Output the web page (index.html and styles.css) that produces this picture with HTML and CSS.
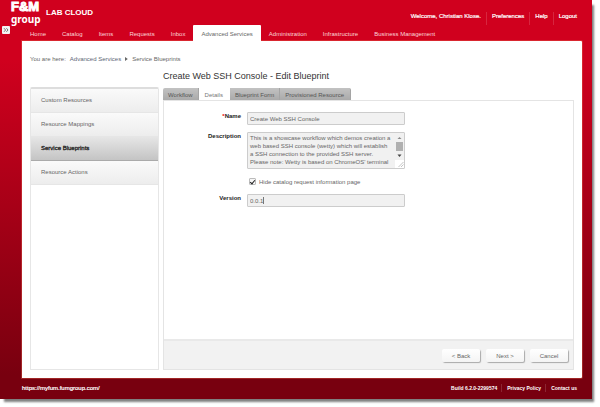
FILE: index.html
```html
<!DOCTYPE html>
<html lang="en">
<head>
<meta charset="utf-8">
<title>Lab Cloud - Edit Blueprint</title>
<link rel="stylesheet" href="styles.css">
</head>
<body>
<div class="frame">
  <header class="header">
    <div class="logo"><span class="logo-top">F&amp;M</span><span class="logo-bottom">group</span></div>
    <strong class="product">LAB CLOUD</strong>
    <div class="user-links">
      <span>Welcome, Christian Klose.</span>
      <a href="#">Preferences</a>
      <a href="#">Help</a>
      <a href="#">Logout</a>
    </div>
  </header>
  <div class="navbar">
    <button class="expand" type="button" aria-label="Expand">
      <svg viewBox="0 0 8 8" width="8" height="8"><path d="M2 2.2 3.6 4 2 5.8M4.4 2.2 6 4 4.4 5.8" fill="none" stroke="#555" stroke-width=".8"/></svg>
    </button>
    <nav class="nav">
      <a href="#">Home</a>
      <a href="#">Catalog</a>
      <a href="#">Items</a>
      <a href="#">Requests</a>
      <a href="#">Inbox</a>
      <a href="#" class="active">Advanced Services</a>
      <a href="#">Administration</a>
      <a href="#">Infrastructure</a>
      <a href="#">Business Management</a>
    </nav>
  </div>
  <main class="content">
    <div class="breadcrumb">
      <span>You are here:</span>
      <a href="#">Advanced Services</a>
      <svg viewBox="0 0 3 4" width="3" height="4"><path d="M0 0 2.800 2 0 4z" fill="#666"/></svg>
      <span>Service Blueprints</span>
    </div>
    <h1 class="title">Create Web SSH Console - Edit Blueprint</h1>
    <div class="columns">
      <aside class="sidebar">
        <a href="#">Custom Resources</a>
        <a href="#">Resource Mappings</a>
        <a href="#" class="selected">Service Blueprints</a>
        <a href="#">Resource Actions</a>
      </aside>
      <section class="editor">
        <div class="tabs">
          <button type="button">Workflow</button>
          <button type="button" class="current">Details</button>
          <button type="button">Blueprint Form</button>
          <button type="button">Provisioned Resource</button>
        </div>
        <form class="panel">
          <div class="fields">
            <label class="name" for="name"><span class="required">*</span>Name</label>
            <input class="box" id="name" type="text" value="Create Web SSH Console">
            <label class="name" for="description">Description</label>
            <div class="area">
              <textarea class="box" id="description">This is a showcase workflow which demos creation a
web based SSH console (wetty) which will establish
a SSH connection to the provided SSH server.
Please note: Wetty is based on ChromeOS' terminal</textarea>
              <svg class="scroll" viewBox="0 0 9 35" width="9" height="35">
                <path d="M0 0h9v35H0z" fill="#f1f1f1"/>
                <path d="M2.500 6 4.500 4 6.500 6z" fill="#888"/>
                <path d="M1 9h7v9H1z" fill="#b0b0b0"/>
                <path d="M2.500 21.500h4L4.500 24z" fill="#444"/>
                <path d="M0 27h9v8H0z" fill="#fff"/>
                <path d="M3.500 34 8.500 29M6 34l2.500-2.500" stroke="#aaa" stroke-width=".7"/>
              </svg>
            </div>
            <label class="check"><input type="checkbox" checked>Hide catalog request information page</label>
            <label class="name" for="version">Version</label>
            <div class="area">
              <input class="box" id="version" type="text" value="0.0.1">
              <span class="caret"></span>
            </div>
          </div>
          <div class="actions">
            <button type="button">&lt; Back</button>
            <button type="button">Next &gt;</button>
            <button type="button">Cancel</button>
          </div>
        </form>
      </section>
    </div>
  </main>
  <footer class="footer">
    <a class="site" href="#">https://myfum.fumgroup.com/</a>
    <span>Build 6.2.0-2299574</span>
    <a href="#">Privacy Policy</a>
    <a href="#">Contact us</a>
  </footer>
</div>
</body>
</html>
```
FILE: styles.css
```css
* { box-sizing: border-box; }

body {
  margin: 0;
  min-height: 100vh;
  display: flex;
  padding: 0 8px 8px 0;
  background: #fff;
  color: #666;
  font: 6px/8px "Liberation Sans", Arial, sans-serif;
}

a { color: inherit; text-decoration: none; }
button, input, textarea { font: inherit; color: inherit; margin: 0; }

.frame {
  flex: 1;
  display: flex;
  flex-direction: column;
  background: linear-gradient(#d0001e 0, #d0001e 15%, #78000f 94%);
  box-shadow: 3px 4px 2px -1px rgba(0, 0, 0, .5);
}

.header {
  display: flex;
  height: 25px;
  padding: 0 15px 0 11px;
  color: #fff;
}
.logo {
  width: 28px;
  font-weight: bold;
}
.logo-top, .logo-bottom { display: block; }
.logo-top {
  font-size: 13px;
  line-height: 14px;
  -webkit-text-stroke: 1px #fff;
}
.logo-bottom {
  font: bold 10px/10px "Noto Sans", sans-serif;
}
.product {
  margin-left: 7px;
  font-size: 8px;
  line-height: 26px;
}
.user-links {
  display: flex;
  margin: 12px 0 0 auto;
  -webkit-text-stroke: .2px #fff;
}
.user-links > * + *, .footer > * + a {
  margin-left: 5px;
  padding-left: 5px;
  border-left: 1px solid rgba(255, 255, 255, .15);
}
.footer > * + a {
  margin-left: 4px;
}

.navbar {
  display: flex;
  height: 16px;
}
.expand {
  width: 8px;
  height: 8px;
  margin: 1px 12px 0 2px;
  padding: 0;
  border: 0;
  border-radius: 1px;
  background: #f4f4f4;
}
.expand svg { display: block; }
.nav { display: flex; color: #fcd5d9; }
.nav a {
  padding: 0 8px;
  line-height: 18px;
}
.nav a.active {
  position: relative;
  z-index: 1;
  border-radius: 1px 1px 0 0;
  background: #fff;
  color: #666;
}

.content {
  flex: 1;
  display: flex;
  flex-direction: column;
  margin: 0 10px 0 22px;
  padding: 14px 8px 8px;
  background: #fff;
  border-radius: 0 1px 1px 0;
  box-shadow: 0 0 0 1px rgba(235, 110, 80, .35);
}

.breadcrumb {
  display: flex;
  align-items: center;
  gap: 4px;
}
.breadcrumb a { color: #5d6675; }
.title {
  margin: 7px 0 5px 133px;
  color: #333;
  font-size: 9px;
  font-weight: normal;
  line-height: 12px;
}

.columns {
  flex: 1;
  display: flex;
  gap: 4px;
}
.sidebar {
  width: 129px;
  border: 1px solid #e6e6e6;
  border-top: 2px solid #ddd;
  border-radius: 2px 2px 0 0;
}
.sidebar a {
  display: block;
  padding: 0 10px;
  line-height: 23px;
  border-bottom: 1px solid #e6e6e6;
  background: linear-gradient(#fafafa, #ededed);
}
.sidebar .selected {
  color: #222;
  -webkit-text-stroke: .3px #222;
  background: linear-gradient(#e6e6e6, #c4c4c4);
  border-bottom-color: #aaa;
}

.editor {
  flex: 1;
  display: flex;
  flex-direction: column;
}
.tabs {
  display: flex;
  height: 13px;
  padding-top: 1px;
}
.tabs button {
  padding: 1px 5px 0;
  border: 0;
  border-right: 1px solid #a5a5a5;
  background: linear-gradient(#c2c2c2, #aaa);
  color: #555;
}
.tabs button:first-child { border-radius: 2px 0 0 0; }
.tabs button:last-child { padding-right: 6px; border-radius: 0 2px 0 0; }
.tabs .current {
  padding: 1px 6px 0;
  background: #fff;
  border-color: #fff;
  color: #777;
}

.panel {
  flex: 1;
  display: flex;
  flex-direction: column;
  border: 1px solid #e4e4e4;
}
.fields {
  flex: 1;
  display: grid;
  grid-template-columns: 77px 158px;
  column-gap: 6px;
  row-gap: 7px;
  align-content: start;
  padding-top: 11px;
}
.name {
  color: #222;
  font-weight: bold;
  text-align: right;
}
.required { color: #e00; }
.box {
  display: block;
  width: 100%;
  height: 13px;
  padding: 0 2px;
  border: 1px solid #ccc;
  border-radius: 1px;
  background: #f1f1f1;
  outline: 0;
}
.area { position: relative; }
textarea.box {
  height: 37px;
  padding-top: 1px;
  overflow: hidden;
  resize: none;
  white-space: pre;
}
.scroll {
  position: absolute;
  top: 1px;
  right: 1px;
}
.caret {
  position: absolute;
  top: 3px;
  left: 16px;
  height: 7px;
  border-left: 1px solid #777;
}
.check {
  grid-column: 2;
  display: flex;
  align-items: center;
  gap: 3px;
  height: 11px;
  margin-left: 2px;
}
.check input {
  appearance: none;
  display: grid;
  place-items: center;
  width: 7px;
  height: 7px;
  border: 1px solid #bbb;
  border-radius: 1px;
  background: #f6f6f6;
}
.check input:checked::before {
  content: "";
  width: 2px;
  height: 4px;
  border: solid #222;
  border-width: 0 1px 1px 0;
  box-sizing: content-box;
  transform: rotate(40deg);
}

.actions {
  display: flex;
  justify-content: flex-end;
  gap: 6px;
  padding: 8px 5px 7px;
  border-top: 2px solid #e9e9e9;
  background: #f2f2f2;
}
.actions button {
  width: 38px;
  height: 13px;
  padding: 0;
  border: 0;
  border-radius: 2px;
  background: linear-gradient(#fff, #f4f4f4);
  box-shadow: 1px 1px 1px rgba(0, 0, 0, .3);
}

.footer {
  display: flex;
  padding: 6px 15px 7px 22px;
  color: #fff;
  font-size: 5px;
  font-weight: bold;
}
.site {
  margin-right: auto;
  font-size: 6px;
  font-weight: normal;
  -webkit-text-stroke: .2px #fff;
}
```
